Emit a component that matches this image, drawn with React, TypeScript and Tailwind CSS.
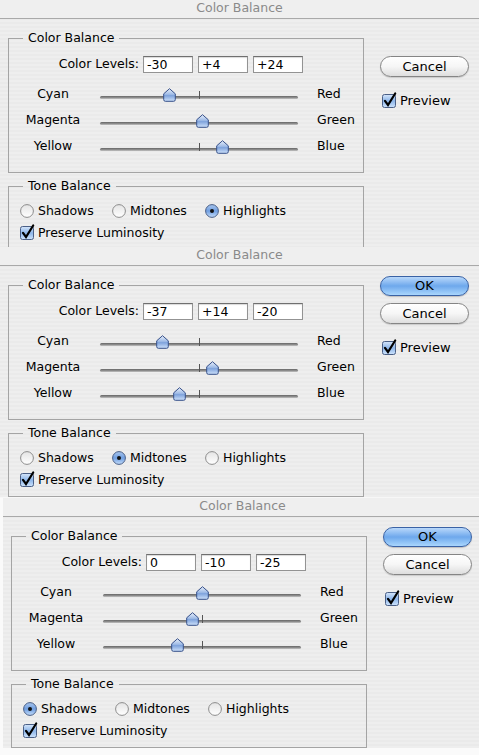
import React from 'react';

type Tone = 'shadows' | 'midtones' | 'highlights';

interface DialogProps {
  levels: [number, number, number];
  tone: Tone;
  showOk?: boolean;
}

const fmt = (v: number) => (v > 0 ? `+${v}` : v < 0 ? `-${Math.abs(v)}` : '0');

const Thumb = () => (
  <svg width="13" height="14" viewBox="0 0 13 14">
    <defs>
      <linearGradient id="thumbFill" x1="0" y1="0" x2="0" y2="1">
        <stop offset="0" stopColor="#e9f0fb" />
        <stop offset="0.45" stopColor="#9fbbe6" />
        <stop offset="0.55" stopColor="#7fa3dc" />
        <stop offset="1" stopColor="#cfe2fb" />
      </linearGradient>
    </defs>
    <path
      d="M6.5 0.7 L12.3 5.8 L12.3 11.6 Q12.3 13.3 10.6 13.3 L2.4 13.3 Q0.7 13.3 0.7 11.6 L0.7 5.8 Z"
      fill="url(#thumbFill)"
      stroke="#36508a"
      strokeWidth="1"
      strokeLinejoin="round"
    />
  </svg>
);

const Check = () => (
  <svg width="14" height="14" viewBox="0 0 14 14" className="shrink-0 overflow-visible">
    <defs>
      <linearGradient id="checkFill" x1="0" y1="0" x2="0" y2="1">
        <stop offset="0" stopColor="#d6e6fa" />
        <stop offset="0.5" stopColor="#8db6ea" />
        <stop offset="1" stopColor="#cfe4fc" />
      </linearGradient>
    </defs>
    <rect x="0.5" y="0.5" width="13" height="13" rx="2" fill="url(#checkFill)" stroke="#4a5f86" />
    <path d="M3 6.8 L6 11 L13.2 -0.5" fill="none" stroke="#000" strokeWidth="2.2" strokeLinecap="round" />
  </svg>
);

const Radio = ({ on }: { on: boolean }) => (
  <svg width="14" height="14" viewBox="0 0 14 14" className="shrink-0">
    <defs>
      <linearGradient id="radioOff" x1="0" y1="0" x2="0" y2="1">
        <stop offset="0" stopColor="#e4e4e4" />
        <stop offset="1" stopColor="#ffffff" />
      </linearGradient>
      <linearGradient id="radioOn" x1="0" y1="0" x2="0" y2="1">
        <stop offset="0" stopColor="#a9c6ee" />
        <stop offset="0.5" stopColor="#6f9ee0" />
        <stop offset="1" stopColor="#c5ddfa" />
      </linearGradient>
    </defs>
    <circle cx="7" cy="7" r="6.4" fill={on ? 'url(#radioOn)' : 'url(#radioOff)'} stroke={on ? '#4a5f86' : '#8c8c8c'} />
    {on && <circle cx="7" cy="7" r="2" fill="#111" />}
  </svg>
);

const SliderRow = ({ left, right, value }: { left: string; right: string; value: number }) => {
  const pos = 3 + ((value + 100) / 200) * 198 - 6.5;
  return (
    <div className="flex h-[26px] items-center">
      <div className="w-[88px] text-center">{left}</div>
      <div className="relative h-full w-[204px]">
        <div className="absolute left-[3px] right-[3px] top-[15px] h-[3px] rounded-full bg-linear-to-b from-[#666] via-[#8a8a8a] to-[#c4c4c4]" />
        <div className="absolute left-[102px] top-[10px] h-[8px] w-px bg-[#555]" />
        <div className="absolute top-[7px]" style={{ left: pos }}>
          <Thumb />
        </div>
      </div>
      <div className="ml-[16px]">{right}</div>
    </div>
  );
};

const Dialog = ({ levels, tone, showOk = true }: DialogProps) => (
  <div className="w-[479px] bg-[repeating-linear-gradient(180deg,#eeeeee_0px,#eeeeee_2px,#eaeaea_2px,#eaeaea_4px)] font-['DejaVu_Sans',sans-serif] text-[12.5px] text-black">
    <div className="flex h-[19px] items-center justify-center border-b border-[#a9a9a9] bg-[#efefef] pb-px text-[#8a8a8a]">
      Color Balance
    </div>
    <div className="flex">
      <div className="ml-[8px] w-[356px]">
        <fieldset className="mt-[11px] border border-[#a4a4a4] pb-[13px]">
          <legend className="ml-[14px] px-[5px] leading-[16px]">Color Balance</legend>
          <div className="mt-[10px] flex h-[17px] items-center">
            <div className="w-[130px] text-right">Color Levels:</div>
            <div className="ml-[4px] flex gap-[5px]">
              {levels.map((v, i) => (
                <input
                  key={i}
                  readOnly
                  value={fmt(v)}
                  className="h-[17px] w-[50px] border border-[#939393] border-t-[#6f6f6f] bg-white pl-[3px] text-[12.5px] leading-[15px] shadow-[inset_0_1px_1px_rgba(0,0,0,0.15)] outline-none"
                />
              ))}
            </div>
          </div>
          <div className="mt-[8px]">
            <SliderRow left="Cyan" right="Red" value={levels[0]} />
            <SliderRow left="Magenta" right="Green" value={levels[1]} />
            <SliderRow left="Yellow" right="Blue" value={levels[2]} />
          </div>
        </fieldset>
        <fieldset className="mt-[5px] border border-[#a4a4a4] pb-[7px]">
          <legend className="ml-[14px] px-[5px] leading-[16px]">Tone Balance</legend>
          <div className="mt-[8px] flex h-[18px] items-center pl-[11px]">
            <div className="flex w-[92px] items-center">
              <Radio on={tone === 'shadows'} />
              <span className="ml-[4px]">Shadows</span>
            </div>
            <div className="flex w-[93px] items-center">
              <Radio on={tone === 'midtones'} />
              <span className="ml-[4px]">Midtones</span>
            </div>
            <div className="flex items-center">
              <Radio on={tone === 'highlights'} />
              <span className="ml-[4px]">Highlights</span>
            </div>
          </div>
          <div className="mt-[4px] flex h-[18px] items-center pl-[11px]">
            <Check />
            <span className="ml-[4px]">Preserve Luminosity</span>
          </div>
        </fieldset>
      </div>
      <div className="ml-[16px] flex w-[89px] flex-col">
        <button
          className={`mt-[10px] h-[20px] rounded-full border border-[#3a62a5] bg-linear-to-b from-[#b9d8fa] via-[#6ea8ec] to-[#a9d6fd] text-[13px] leading-[18px] shadow-[0_1px_1px_rgba(0,0,0,0.2)] ${showOk ? '' : 'invisible'}`}
        >
          OK
        </button>
        <button className="mt-[7px] h-[21px] rounded-full border border-[#858585] bg-linear-to-b from-white via-[#f6f6f6] to-[#dedede] text-[13px] leading-[19px] shadow-[0_1px_1px_rgba(0,0,0,0.15)]">
          Cancel
        </button>
        <div className="mt-[16px] flex h-[16px] items-center pl-[2px]">
          <Check />
          <span className="ml-[4px] text-[13px]">Preview</span>
        </div>
      </div>
    </div>
  </div>
);

export default function App() {
  return (
    <div className="flex h-[755px] w-[479px] flex-col overflow-hidden bg-[#f7f7f7]">
      <div className="h-[247px] overflow-hidden">
        <Dialog levels={[-30, 4, 24]} tone="highlights" showOk={false} />
      </div>
      <div className="h-[251px] overflow-hidden">
        <Dialog levels={[-37, 14, -20]} tone="midtones" />
      </div>
      <div className="flex-1 overflow-hidden bg-[#fafafa] pl-[3px]">
        <Dialog levels={[0, -10, -25]} tone="shadows" />
      </div>
    </div>
  );
}
